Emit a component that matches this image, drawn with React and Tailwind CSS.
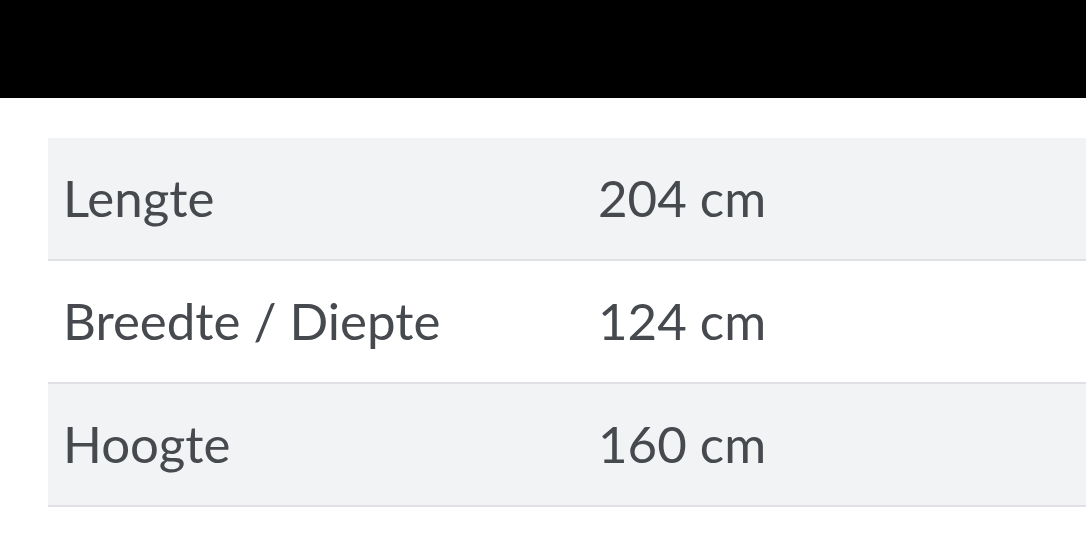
export default function App() {
  const rows = [
    { label: "Lengte", value: "204 cm", bg: "bg-[#f2f3f5]" },
    { label: "Breedte / Diepte", value: "124 cm", bg: "bg-white" },
    { label: "Hoogte", value: "160 cm", bg: "bg-[#f2f3f5]" },
  ];
  return (
    <div className="w-[1086px] h-[534px] bg-white overflow-hidden flex flex-col" style={{ fontFamily: "Lato, 'Open Sans', sans-serif" }}>
      <div className="h-[98px] bg-black shrink-0" />
      <div className="pt-[40px] pl-[48px]">
        {rows.map((r) => (
          <div key={r.label} className={`${r.bg} h-[123px] border-b-2 border-[#dfe1e5] flex items-center text-[#46494e] text-[51px]`}>
            <div className="w-[550px] pl-[15px]">{r.label}</div>
            <div>{r.value}</div>
          </div>
        ))}
      </div>
    </div>
  );
}
